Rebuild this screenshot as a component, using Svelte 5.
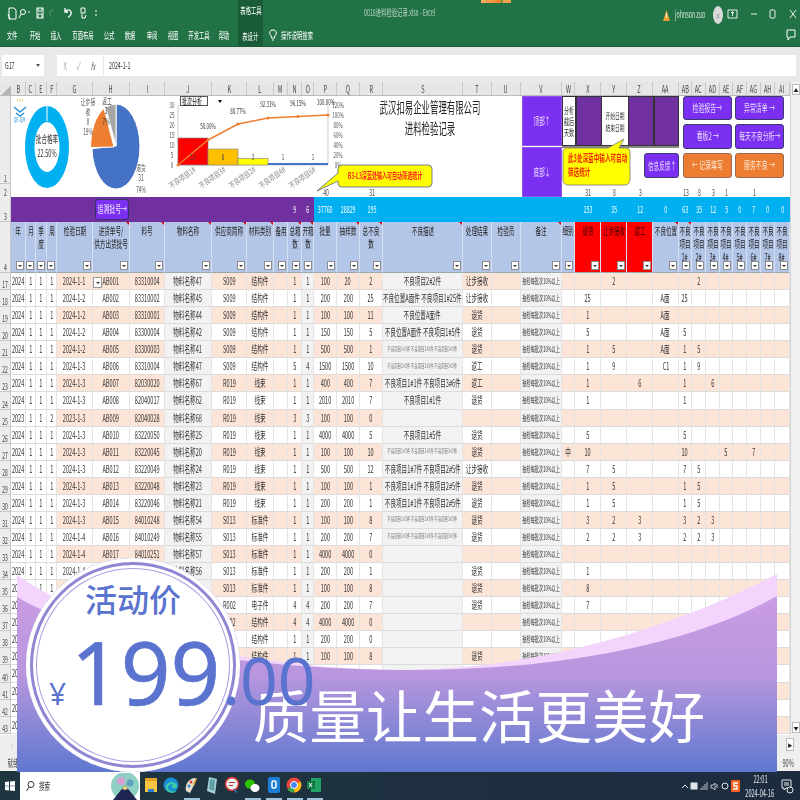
<script>
  const letters = 'B C E F G H I J K L M N O P Q R S T U V W X Y Z AA AB AC AD AE AF AG AH AI'.split(' ');
  const graySet = new Set(['J', 'O', 'S', 'V']);
  const plainSet = new Set(['B', 'C', 'E', 'F']);
  const tabs = [['文件', 12], ['开始', 35], ['插入', 56], ['页面布局', 83], ['公式', 109], ['数据', 130], ['审阅', 152], ['视图', 173], ['开发工具', 199], ['帮助', 224]];

  // header row 4: lines of each column title
  const heads = {
    B: ['年'], C: ['月'], E: ['季', '度'], F: ['周'], G: ['检验日期'], H: ['进货单号/', '供方出货批号'], I: ['料号'],
    J: ['物料名称'], K: ['供应商简称'], L: ['材料类别'], M: ['备用'], N: ['总箱', '数'], O: ['开箱', '数'], P: ['批量'],
    Q: ['抽样数'], R: ['总不良', '数'], S: ['不良描述'], T: ['处理结果'], U: ['检验员'], V: ['备注'], W: ['细别'],
    X: ['退货'], Y: ['让步接收'], Z: ['返工'], AA: ['不良位置'], AB: ['不良', '项目', '1#'], AC: ['不良', '项目', '2#'],
    AD: ['不良', '项目', '3#'], AE: ['不良', '项目', '4#'], AF: ['不良', '项目', '5#'], AG: ['不良', '项目', '6#'],
    AH: ['不良', '项目', '7#'], AI: ['不良', '项目', '8#']
  };
  const flagged = new Set(['H', 'I', 'J', 'K', 'L', 'N', 'O', 'Q', 'R', 'S', 'V', 'AA', 'AB']);
  const reds = new Set(['X', 'Y', 'Z']);

  const totals = { N: '9', O: '6', P: '37760', Q: '28829', R: '195', X: '153', Y: '35', Z: '12', AA: '0', AB: '63', AC: '35', AD: '12', AE: '5', AF: '0', AG: '7', AH: '0', AI: '0' };
  const row2 = { P: '40', R: '31', X: '31', Y: '8', Z: '3', AB: '13', AC: '8', AD: '3', AE: '1', AG: '1' };

  const tinyA = '不良项目1#5件 不良项目2#5件 不良项目3#5件';

  function row(num, head, desc, result, marks = '') {
    const f = head.split(' ');
    const v = {
      B: f[0], C: f[1], E: f[2], F: f[3], G: f[4], H: f[5], I: f[6], J: f[7], K: f[8], L: f[9], N: f[10], O: f[11],
      P: f[12], Q: f[13], R: f[14], S: desc, T: result, V: '抽检每批次10%以上'
    };
    for (const m of marks.split(' ')) {
      if (m) v[m.split('=')[0]] = m.split('=')[1];
    }
    return { num, v };
  }

  const rows = [
    row(17, '2024 1 1 1 2024-1-1 AB001 83310004 物料名称47 S009 结构件 1 1 100 20 2', '不良项目2#2件', '让步接收', 'Y=2 AC=2'),
    row(18, '2024 1 1 1 2024-1-2 AB002 83310002 物料名称45 S009 结构件 1 1 200 200 25', '不良位置A面件 不良项目1#25件', '让步接收', 'X=25 AA=A面 AB=25'),
    row(19, '2024 1 1 1 2024-1-2 AB003 83310001 物料名称44 S009 结构件 1 1 100 100 11', '不良位置A面件', '退货', 'X=1 AA=A面'),
    row(20, '2024 1 1 1 2024-1-2 AB004 83300004 物料名称42 S009 结构件 1 1 150 150 5', '不良位置A面件 不良项目1#5件', '退货', 'X=5 AA=A面 AB=5'),
    row(21, '2024 1 1 1 2024-1-2 AB005 83300003 物料名称41 S009 结构件 1 1 500 500 1', tinyA, '退货', 'X=1 Y=5 AA=A面 AB=1 AC=5'),
    row(22, '2024 1 1 1 2024-1-3 AB006 83310004 物料名称47 S009 结构件 5 4 1500 1500 10', tinyA, '返工', 'X=1 Y=9 AA=C1 AB=1 AC=9'),
    row(23, '2024 1 1 1 2024-1-3 AB007 82030020 物料名称67 R019 线束 1 1 400 400 7', '不良项目1#1件 不良项目3#6件', '返工', 'X=1 Z=6 AB=1 AD=6'),
    row(24, '2024 1 1 1 2024-1-3 AB008 82040017 物料名称62 R019 线束 1 1 2010 2010 7', '不良项目1#1件', '退货', 'X=1 AB=1'),
    row(25, '2023 1 1 2 2023-1-3 AB009 82040028 物料名称68 R019 线束 3 3 100 100 0', '', ''),
    row(26, '2024 1 1 1 2024-1-3 AB010 83220050 物料名称25 R019 线束 1 1 4000 4000 5', '不良项目1#5件', '退货', 'X=5 AB=5'),
    row(27, '2024 1 1 1 2024-1-3 AB011 83220045 物料名称20 R019 线束 1 1 100 100 10', tinyA, '退货', 'W=中 X=10 AB=10 AE=5 AG=7'),
    row(28, '2024 1 1 1 2024-1-3 AB012 83220049 物料名称24 R019 线束 1 1 500 500 12', '不良项目1#7件 不良项目2#5件', '让步接收', 'X=7 Y=5 AB=7 AC=5'),
    row(29, '2024 1 1 1 2024-1-3 AB013 83220048 物料名称23 R019 线束 1 1 100 100 1', '不良项目1#1件 不良项目2#5件', '退货', 'X=1 Y=5 AB=1 AC=5'),
    row(30, '2024 1 1 1 2024-1-3 AB014 83220046 物料名称21 R019 线束 1 1 200 200 1', '不良项目1#1件 不良项目2#5件', '退货', 'X=1 Y=5 AB=1 AC=5'),
    row(31, '2024 1 1 1 2024-1-3 AB015 84010248 物料名称54 S013 标准件 1 1 100 100 8', tinyA, '退货', 'X=3 Y=2 Z=3 AB=3 AC=2 AD=3'),
    row(32, '2024 1 1 1 2024-1-4 AB016 84010249 物料名称55 S013 标准件 1 1 200 200 7', tinyA, '退货', 'X=2 Y=2 Z=3 AB=2 AC=2 AD=3'),
    row(33, '2024 1 1 1 2024-1-4 AB017 84010251 物料名称57 S013 标准件 1 1 4000 4000 0', '', ''),
    row(34, '2024 1 1 1 2024-1-4 AB018 84010250 物料名称56 S013 标准件 1 1 200 200 1', '', '退货', 'X=1'),
    row(35, '2024 1 1 1 2024-1-4 AB019 84010252 物料名称58 S013 标准件 1 1 100 100 8', '', '退货', 'X=8'),
    row(36, '2024 1 1 1 2024-1-4 AB020 85010011 物料名称70 R002 电子件 4 4 200 200 7', '', '退货', 'X=7'),
    row(37, '2024 1 1 1 2024-1-4 AB021 83310005 物料名称48 S002 结构件 4 4 4000 4000 0', '', ''),
    row(38, '2024 1 1 1 2024-1-4 AB022 83310006 物料名称49 S002 结构件 1 1 200 200 0', '', ''),
    row(39, '2024 1 1 1 2024-1-4 AB023 83310007 物料名称50 S002 结构件 1 1 100 100 8', '', '退货'),
    row(40, '2024 1 1 1 2024-1-4 AB024 83310008 物料名称51 S002 结构件 1 1 100 100 0', '', ''),
    row(41, '2024 1 1 1 2024-1-4 AB025 83310009 物料名称52 S002 结构件 1 1 100 100 0', '', ''),
    row(42, '2024 1 1 1 2024-1-4 AB026 83310010 物料名称53 S002 结构件 1 1 100 100 0', '', ''),
    row(43, '2024 1 1 1 2024-1-4 AB027 83310011 物料名称59 S002 结构件 1 1 100 100 0', '', '')
  ];

  function bg(l, num) {
    if (graySet.has(l)) return 'gray';
    if (plainSet.has(l)) return '';
    return num % 2 ? 'peach' : '';
  }

  // pareto chart labels: x, y, text
  const axisL = [[105, '30'], [115, '25'], [125, '20'], [135, '15'], [145, '10'], [155, '5'], [165, '0']];
  const axisR = [[105, '120%'], [115, '100%'], [125, '80%'], [135, '60%'], [145, '40%'], [155, '20%'], [165, '0%']];
  const pcts = [[208, 129, '50.00%'], [238, 114, '80.77%'], [268, 107, '92.31%'], [298, 106, '96.15%'], [326, 105, '100.00%']];
  const barVals = [[193, '13'], [223, '8'], [253, '3'], [283, '1'], [313, '1']];
  const cats = [[184, '不良项目1#'], [214, '不良项目3#'], [244, '不良项目2#'], [274, '不良项目4#'], [304, '不良项目6#']];
  const dockX = [151, 171, 191, 212, 232, 252, 274, 294, 314];
</script>

<div class="page">
  <header class="title soft">
    <div class="qat">
      <svg width="100" height="16" viewBox="0 0 100 16" fill="none" stroke="#fff" stroke-width="1">
        <path d="M9 3h5l2 2v9H9zM8 9l2 5" />
        <circle cx="23" cy="7" r="2.5" /><path d="M21 9l-2 4M28 7l2 0" />
        <rect x="37" y="3" width="6" height="10" /><path d="M38 3v3h4V3M38 13v-4h4v4" />
        <path d="M54 6c-2-2-5 0-4 3 0 1 1 2 2 3" stroke="#5d9577" />
        <path d="M66 6c2-2 6-1 5 3 0 1-2 3-3 3M65 3v4h3" stroke-width="1.3" />
        <path d="M81 3h4v5h-4zM82 9v4h3l1-3" />
        <path d="M95 6h2M95 10h2" />
      </svg>
    </div>
    <div class="tool-tab">
      <span class="s">表格工具</span>
      <span class="s active">表设计</span>
    </div>
    <span class="s file">0018进料检验记录.xlsx - Excel</span>
    {#each tabs as t}
      <span class="s tab" style="left:{t[1]}px">{t[0]}</span>
    {/each}
    <svg class="bulb" width="8" height="12" viewBox="0 0 8 12" fill="none" stroke="#fff"><path d="M4 1a3 3 0 0 1 2 5.500L5.500 9h-3L2 6.500A3 3 0 0 1 4 1zM3 11h2" /></svg>
    <span class="s tab" style="left:297px">操作说明搜索</span>
    <div class="sprite"></div>
    <div class="account">
      <svg width="7" height="11" viewBox="0 0 7 11"><path d="M3.500 0L7 11H0z" fill="#f0a030" /><path d="M3.500 3v5" stroke="#fff" /></svg>
      <span class="s user">johnson zuo</span>
      <span class="avatar"><span class="s">JZ</span></span>
      <svg class="winbtns" width="76" height="12" viewBox="0 0 76 12" fill="none" stroke="#e6efe9">
        <path d="M2 2h9v8H2zM6.500 8V4M5 5l1.500-1.500L8 5" />
        <path d="M25 6h6" />
        <rect x="44" y="2" width="5" height="8" rx="1" />
        <path d="M64 2l6 8M70 2l-6 8" />
      </svg>
    </div>
    <svg class="comment" width="10" height="12" viewBox="0 0 10 12" fill="none" stroke="#fff"><path d="M1 1h8v7H4l-2 3V8H1z" /></svg>
  </header>

  <div class="formula soft">
    <div class="namebox"><span class="s left">G17</span><i class="tri"></i></div>
    <div class="fxbox">
      <span class="s mute">X</span><span class="s mute">✓</span><span class="s fx">fx</span>
    </div>
    <div class="input"><span class="s left">2024-1-1</span></div>
  </div>

  <div class="sheetwrap soft">
    <div class="sheet">
      <div class="grid colhead">
        <div class="corner"></div>
        {#each letters as l}
          <div class="ch"><span class="s">{l}</span></div>
        {/each}
      </div>

      <div class="top">
        <div class="nums">
          <div class="n1"><span class="s">1</span></div>
          <div class="n2"><span class="s">2</span></div>
        </div>
        <div class="canvas">
          <svg width="511" height="101" viewBox="11 96 511 101">
            <!-- logo -->
            <path d="M14 107l6 5 6-5M16 113l4 3 4-3" fill="none" stroke="#2f8fd6" stroke-width="1.500" />
            <path d="M20 98v4M17 99l1 3M23 99l-1 3" stroke="#e8c060" stroke-width=".7" />
            <text class="t" transform="translate(19.500 122) scale(.6 1)" font-size="6" fill="#2f8fd6">QE-QM</text>

            <!-- donut -->
            <ellipse cx="47" cy="147" rx="22" ry="41" fill="#00b0f0" />
            <ellipse cx="47" cy="147" rx="12.500" ry="25" fill="#fff" />
            <path d="M47 105v16" stroke="#fff" stroke-width="1" />
            <text class="t" transform="translate(47 143) scale(.56 1)" font-size="10" fill="#333">批合格率</text>
            <text class="t" transform="translate(47 157) scale(.56 1)" font-size="10" fill="#333">22.50%</text>

            <!-- pie -->
            <path d="M116 104A24 42.500 0 1 1 92 148.700L116 146Z" fill="#4472c4" stroke="#fff" />
            <path d="M114 147L90.500 147.500A24 42.500 0 0 1 104 108.500Z" fill="#ed7d31" stroke="#fff" />
            <path d="M116 146L105.800 107.500A24 42.500 0 0 1 116 104Z" fill="#a5a5a5" stroke="#fff" />
            <text class="t" transform="translate(88 105) scale(.56 1)" font-size="8.500" fill="#555">让步接</text>
            <text class="t" transform="translate(88 115) scale(.56 1)" font-size="8.500" fill="#555">收</text>
            <text class="t" transform="translate(88 125) scale(.56 1)" font-size="8.500" fill="#555">8</text>
            <text class="t" transform="translate(88 135) scale(.56 1)" font-size="8.500" fill="#555">19%</text>
            <text class="t" transform="translate(107 104) scale(.56 1)" font-size="8.500" fill="#555">返工</text>
            <text class="t" transform="translate(106 114) scale(.56 1)" font-size="8.500" fill="#333">3</text>
            <text class="t" transform="translate(106 125) scale(.56 1)" font-size="8.500" fill="#333">7%</text>
            <text class="t" transform="translate(141 171) scale(.56 1)" font-size="8.500" fill="#555">退货</text>
            <text class="t" transform="translate(141 181) scale(.56 1)" font-size="8.500" fill="#555">31</text>
            <text class="t" transform="translate(141 193) scale(.56 1)" font-size="8.500" fill="#555">74%</text>

            <!-- pareto -->
            <path d="M178 105V165H328V105" fill="none" stroke="#d0d0d0" />
            <rect x="178" y="138" width="30" height="27" fill="#f00" stroke="#7f7f7f" stroke-width=".6" />
            <rect x="208" y="149" width="30" height="16" fill="#ffc000" stroke="#7f7f7f" stroke-width=".6" />
            <rect x="238" y="158.500" width="30" height="6.500" fill="#ff0" stroke="#7f7f7f" stroke-width=".6" />
            <rect x="268" y="163" width="30" height="2" fill="#4472c4" />
            <rect x="298" y="163" width="30" height="2" fill="#4472c4" />
            <polyline points="178,165 208,140 238,124 268,118 298,116.500 328,115" fill="none" stroke="#ed7d31" stroke-width="1.500" />
            {#each [[178, 165], [208, 140], [238, 124], [268, 118], [298, 116.500], [328, 115]] as p}
              <circle cx={p[0]} cy={p[1]} r="1.500" fill="#ed7d31" />
            {/each}
            {#each axisL as a}
              <text class="t" transform="translate(172 {a[0] + 2.500}) scale(.56 1)" font-size="8" fill="#555">{a[1]}</text>
            {/each}
            {#each axisR as a}
              <text class="t" transform="translate(338 {a[0] + 2.500}) scale(.56 1)" font-size="8" fill="#555">{a[1]}</text>
            {/each}
            {#each pcts as p}
              <text class="t" transform="translate({p[0]} {p[1]}) scale(.56 1)" font-size="8" fill="#333">{p[2]}</text>
            {/each}
            {#each barVals as b}
              <text class="t" transform="translate({b[0]} 160) scale(.56 1)" font-size="8" fill="#444">{b[1]}</text>
            {/each}
            {#each cats as c}
              <text class="t" transform="translate({c[0]} 180) rotate(-36) scale(.76 1)" font-size="8" fill="#888">{c[1]}</text>
            {/each}

            <!-- left callout -->
            <path d="M342 165H428a4 4 0 0 1 4 4V183a4 4 0 0 1-4 4H342a4 4 0 0 1-4-4V181L317 191L338 173V169a4 4 0 0 1 4-4Z" fill="#ff0" stroke="#50608a" stroke-width=".8" />
            <text class="t" transform="translate(385 179) scale(.56 1)" font-size="9" font-weight="700" fill="#f22">B3-L3深蓝处输入可自动筛选统计</text>
          </svg>
          <div class="slicer"><span class="s left">批次分析</span><i class="tri small"></i></div>
          <div class="heading">
            <div class="h1"><span class="s">武汉扣易企业管理有限公司</span></div>
            <div class="h2"><span class="s">进料检验记录</span></div>
          </div>
        </div>

        <div class="nav">
          <div class="navbtn"><span class="s">顶部↑</span></div>
          <div class="navbtn"><span class="s">底部↓</span></div>
        </div>

        <div class="mid">
          <div class="blocks">
            <div class="wh w1"><span class="s">分析</span><span class="s">截后</span><span class="s">天数</span></div>
            <div class="pu"></div>
            <div class="wh w2"><span class="s">开始日期</span><span class="s">结束日期</span></div>
            <div class="pu"></div>
            <div class="pu"></div>
          </div>
          <div class="bubble">
            <svg width="70" height="50" viewBox="0 0 70 50">
              <path d="M6 10H46L62 1L57 10H64a4 4 0 0 1 4 4V42a5 5 0 0 1-5 5H6a5 5 0 0 1-5-5V14a4 4 0 0 1 5-4Z" fill="#ff0" stroke="#7a7a7a" stroke-width=".8" />
            </svg>
            <div class="bubble-text">
              <span class="s left">此3处深蓝中输入可自动</span>
              <span class="s left">筛选统计</span>
            </div>
          </div>
          <div class="feedback"><span class="s">信息反馈↑</span></div>
        </div>

        <div class="btns">
          <div class="btn"><span class="s">检验报告→</span></div>
          <div class="btn"><span class="s">异常清单 →</span></div>
          <div class="btn"><span class="s">看板2 →</span></div>
          <div class="btn"><span class="s">每天不良分析→</span></div>
          <div class="btn or"><span class="s">← 记录填写</span></div>
          <div class="btn or"><span class="s">服务不良 →</span></div>
        </div>

        <div class="grid rowtwo">
          <div></div>
          {#each letters as l}
            <div class="c bare">{#if row2[l]}<span class="s">{row2[l]}</span>{/if}</div>
          {/each}
        </div>
      </div>

      <div class="grid row3">
        <div class="rn"><span class="s">3</span></div>
        {#each letters as l, i}
          <div class="c {i < 13 ? 'pur' : 'sky'}">{#if totals[l]}<span class="s">{totals[l]}</span>{/if}</div>
        {/each}
        <div class="trace"><span class="s">追溯批号→</span></div>
      </div>

      <div class="grid row4">
        <div class="rn"><span class="s">4</span></div>
        {#each letters as l}
          <div class="hd" class:red={reds.has(l)}>
            {#each heads[l] as line}
              <span class="s">{line}</span>
            {/each}
            {#if flagged.has(l)}<i class="flag"></i>{/if}
            <i class="filter"></i>
          </div>
        {/each}
      </div>

      <div class="rows">
        {#each rows as r}
          <div class="grid data">
            <div class="rn low"><span class="s">{r.num}</span></div>
            {#each letters as l}
              <div class="c {bg(l, r.num)}" class:rem={l === 'V'} class:tiny={l === 'S' && r.v.S === tinyA}>
                {#if r.v[l]}<span class="s">{r.v[l]}</span>{/if}
                {#if r.num === 17 && l === 'H'}<i class="pick"></i>{/if}
              </div>
            {/each}
          </div>
        {/each}
      </div>
    </div>

    <div class="vscroll">
      <div class="arrow">▲</div>
      <div class="arrow bottom">▼</div>
    </div>
  </div>

  <div class="hbar soft"><span class="s">‹</span><i class="endbtn">▶</i></div>
  <div class="status soft"><span class="s">就绪</span><span class="s">90%</span></div>

  <footer class="task soft">
    <svg class="winlogo" width="10" height="10" viewBox="0 0 10 10" fill="#fff"><path d="M0 1l4-.5V4.700H0zM5 .4L10 0v4.700H5zM0 5.300h4V9.500L0 9zM5 5.300h5V10L5 9.600z" /></svg>
    <div class="search">
      <svg width="10" height="12" viewBox="0 0 10 12" fill="none" stroke="#333"><circle cx="6" cy="4.500" r="3" /><path d="M4 7L1.500 11" /></svg>
      <span class="s left">搜索</span>
      <svg class="scene" width="30" height="27" viewBox="0 0 30 27">
        <rect width="30" height="27" fill="#fff" />
        <circle cx="15" cy="13" r="14" fill="#8fd0c4" />
        <circle cx="11" cy="8" r="4" fill="#d5a0d0" />
        <circle cx="20" cy="10" r="3.500" fill="#5fa0c0" />
        <path d="M3 27L15 12L27 27Z" fill="#1d2550" />
        <path d="M12 16l3-4 3 4-3 1z" fill="#f0d080" />
      </svg>
    </div>
    <div class="dock">
      {#each dockX as x, i}
        <svg class="dicon" style="left:{x - 9}px" width="18" height="20" viewBox="0 0 18 20">
          {#if i === 0}
            <path d="M3 3h12v14H3z" fill="#f5c542" /><path d="M3 3h12v3H3z" fill="#e0a020" /><path d="M6 14h6v3H6z" fill="#2a7fd0" />
          {:else if i === 1}
            <circle cx="9" cy="10" r="7.500" fill="#1b8fd6" /><path d="M4 12c0-5 9-7 11-1 0 3-5 3-5 1 0-2 2-2 2-2-3-2-6 0-6 3 0 3 5 5 9 2-3 5-11 3-11-3z" fill="#40d0a0" />
          {:else if i === 2}
            <path d="M4 16C2 8 9 2 14 3l-2 7-4 8z" fill="#e8e0c8" /><circle cx="9" cy="7" r="1.500" fill="#e04040" /><circle cx="7" cy="11" r="1.500" fill="#3080e0" /><path d="M11 9l3-6 1 1-3 7z" fill="#e0a040" />
          {:else if i === 3}
            <path d="M6 2l8 2-2 15-8-3z" fill="#a8d0d8" /><path d="M7 4l5 1-1 11-5-2z" fill="#60a0a8" />
          {:else if i === 4}
            <circle cx="9" cy="9" r="6.500" fill="#f0f0f0" stroke="#d03030" stroke-width="1.500" /><path d="M6 7h6v1H6zM6 10h4v1H6z" fill="#b03030" /><path d="M10 13l5 4-2 1z" fill="#3070c0" />
          {:else if i === 5}
            <ellipse cx="7" cy="9" rx="5" ry="4.500" fill="#2dc100" /><ellipse cx="12" cy="13" rx="4.500" ry="4" fill="#fff" />
          {:else if i === 6}
            <rect x="3" y="2" width="12" height="16" rx="2" fill="#1b7fd8" /><rect x="7" y="6" width="4" height="7" rx="1.500" fill="none" stroke="#fff" stroke-width="1.500" />
          {:else if i === 7}
            <circle cx="9" cy="10" r="7.500" fill="#e8453c" /><path d="M9 10L2.500 14a7.500 7.500 0 0 0 7 3.500z" fill="#34a853" /><path d="M9 10l6.500-3.500A7.500 7.500 0 0 1 9.500 17.500z" fill="#fbbc05" /><circle cx="9" cy="10" r="3.500" fill="#4285f4" stroke="#fff" />
          {:else}
            <rect x="6" y="3" width="10" height="14" fill="#21a366" /><rect x="2" y="6" width="8" height="8" fill="#107c41" /><path d="M4 8l3 4M7 8l-3 4" stroke="#fff" />
          {/if}
        </svg>
      {/each}
      {#each [192, 253, 274, 295, 315] as x}
        <i class="under" style="left:{x - 8}px"></i>
      {/each}
    </div>
    <div class="tray">
      <svg width="48" height="12" viewBox="0 0 48 12" fill="none" stroke="#dfe6ea">
        <path d="M0 8l3-3 3 3" />
        <rect x="9" y="3" width="6" height="6" fill="#dfe6ea" />
        <path d="M19 10V8M21 10V6M23 10V4M25 10V2" stroke-width=".8" />
        <path d="M29 5h2l2-2v7l-2-2h-2zM35 4v4" stroke-width=".8" />
        <circle cx="43" cy="6" r="3" />
      </svg>
      <svg class="sogou" width="9" height="12" viewBox="0 0 9 12"><rect width="9" height="12" rx="1" fill="#f4601e" /><path d="M7 3H3v3h3v3H2" fill="none" stroke="#fff" stroke-width="1.300" /></svg>
      <div class="clock"><span class="s">22:01</span><span class="s">2024-04-16</span></div>
      <svg width="14" height="16" viewBox="0 0 14 16" fill="none" stroke="#e4e9ec"><path d="M2 2h9v8H6l-2 2v-2H2zM4 5h5M4 7h5" /><circle cx="10" cy="12" r="3" fill="#1f2d3a" /></svg>
    </div>
  </footer>

  <aside class="banner">
    <svg class="wave" width="760" height="217" viewBox="17 555 760 217">
      <defs>
        <linearGradient id="violet" x1="0" y1="0" x2="0" y2="1">
          <stop offset="0" stop-color="#c99ce2" />
          <stop offset=".45" stop-color="#b896de" />
          <stop offset="1" stop-color="#5f78cf" />
        </linearGradient>
      </defs>
      <path d="M17 575C110 640 260 668 400 670C540 670 680 625 777 574V772H17Z" fill="#f3d4fc" />
      <path d="M17 597C110 650 260 669 400 670C540 671 680 650 777 596V772H17Z" fill="url(#violet)" />
    </svg>
    <div class="slogan">质量让生活更美好</div>
    <div class="circle">
      <div class="promo">活动价</div>
    </div>
    <div class="price">
      <span class="yen">¥</span><span class="big">199</span><span class="cents">.00</span>
    </div>
  </aside>
</div>

<style>
  :global(body) {
    margin: 0;
    background: #fff;
  }

  .page {
    position: relative;
    width: 800px;
    height: 800px;
    overflow: hidden;
    display: flex;
    flex-direction: column;
    font-family: "Noto Sans CJK SC", "Noto Sans", sans-serif;
    font-size: 10px;
    color: #333;
    --cols: 11px 15px 10px 11px 10px 36px 37px 35px 47px 35px 27px 14px 14px 12px 23px 23px 23px 80px 29px 29px 41px 13px 26px 26px 26px 26px 13px 14px 14px 13px 14px 14px 14px 15px;
  }

  /* the shot is a blurry low-res capture */
  .soft {
    filter: blur(0.45px);
  }

  /* everything in the shot is squeezed sideways */
  .s {
    display: inline-block;
    white-space: nowrap;
    transform: scaleX(0.56);
    line-height: 1;
  }
  .s.left {
    transform-origin: left center;
  }
  .t {
    font-family: "Noto Sans CJK SC", "Noto Sans", sans-serif;
    text-anchor: middle;
  }

  .grid {
    display: grid;
    grid-template-columns: var(--cols);
  }

  /* title bar */
  .title {
    position: relative;
    height: 47px;
    flex: none;
    box-sizing: border-box;
    background: #217346;
    border-bottom: 1px solid #1a5c38;
    color: #fff;
  }
  .qat {
    position: absolute;
    left: 0;
    top: 5px;
  }
  .tool-tab {
    position: absolute;
    left: 238px;
    top: 0;
    width: 25px;
    height: 46px;
    background: #1a5c38;
    display: flex;
    flex-direction: column;
    align-items: center;
    justify-content: space-between;
    padding: 6px 0 5px;
    box-sizing: border-box;
    font-size: 9.5px;
  }
  .file {
    position: absolute;
    left: 364px;
    top: 8px;
    transform-origin: left center;
    color: #bcd4c4;
    font-size: 9.5px;
  }
  .tab {
    position: absolute;
    top: 31px;
    translate: -50% 0;
    font-size: 9.5px;
  }
  .bulb {
    position: absolute;
    left: 269px;
    top: 29px;
  }
  .sprite {
    position: absolute;
    left: 481px;
    top: 0;
    width: 30px;
    height: 3px;
    background: linear-gradient(90deg, #f7b267 0, #ef7d22 65%, #3a8f55 70%, #f4a450 75%);
  }
  .account {
    position: absolute;
    left: 663px;
    top: 6px;
    display: flex;
    align-items: center;
    gap: 0;
  }
  .user {
    width: 34px;
    margin-left: 5px;
    transform-origin: left center;
    color: #d8e6dd;
    font-size: 9.5px;
  }
  .avatar {
    width: 10px;
    height: 18px;
    border-radius: 50%;
    background: #d9d9d9;
    color: #666;
    font-size: 5px;
    display: flex;
    align-items: center;
    justify-content: center;
    margin-left: 4px;
  }
  .winbtns {
    margin-left: 3px;
    margin-top: -2px;
  }
  .comment {
    position: absolute;
    left: 786px;
    top: 29px;
  }

  /* name box and formula bar */
  .formula {
    height: 35px;
    flex: none;
    box-sizing: border-box;
    padding: 8px 4px 6px 2px;
    background: #e9e9e9;
    display: flex;
    gap: 1px;
  }
  .namebox {
    width: 42px;
    margin-right: 12px;
    background: #fff;
    display: flex;
    align-items: center;
    justify-content: space-between;
    padding: 0 4px 0 3px;
    box-sizing: border-box;
    font-size: 9.5px;
  }
  .fxbox {
    width: 46px;
    background: #fff;
    display: flex;
    align-items: center;
    justify-content: space-around;
    padding: 0 2px;
    box-sizing: border-box;
  }
  .mute {
    color: #aaa;
    font-size: 11px;
  }
  .fx {
    font-style: italic;
    color: #666;
    font-size: 10px;
  }
  .input {
    flex: 1;
    background: #fff;
    display: flex;
    align-items: center;
    padding-left: 5px;
    font-size: 9.5px;
  }
  .tri {
    width: 0;
    height: 0;
    border: 2.500px solid transparent;
    border-top: 3px solid #555;
    border-bottom: 0;
  }
  .tri.small {
    border-top-color: #000;
  }

  /* sheet */
  .sheetwrap {
    height: 653px;
    flex: none;
    display: flex;
  }
  .sheet {
    width: 790px;
    display: flex;
    flex-direction: column;
  }
  .colhead {
    height: 14px;
    background: #e6e6e6;
    border-bottom: 1px solid #bbb;
    box-sizing: border-box;
  }
  .corner {
    background: linear-gradient(135deg, transparent 60%, #b5b5b5 60%);
  }
  .ch {
    display: flex;
    align-items: center;
    justify-content: center;
    border-right: 1px solid #c8c8c8;
    color: #444;
    font-size: 10px;
    box-sizing: border-box;
  }

  .top {
    position: relative;
    height: 101px;
    display: flex;
    background: #fff;
  }
  .nums {
    width: 11px;
    background: #ececec;
    border-right: 1px solid #c8c8c8;
    box-sizing: border-box;
    display: flex;
    flex-direction: column;
    font-size: 9px;
    color: #444;
  }
  .n1 {
    flex: 1;
    display: flex;
    align-items: flex-end;
    justify-content: center;
    padding-bottom: 0;
    border-bottom: 1px solid #c8c8c8;
  }
  .n2 {
    height: 13px;
    display: flex;
    align-items: flex-end;
    justify-content: center;
  }
  .canvas {
    position: relative;
    width: 511px;
  }
  .canvas svg {
    display: block;
    overflow: visible;
  }
  .slicer {
    position: absolute;
    left: 169px;
    top: 0;
    width: 28px;
    height: 10px;
    box-sizing: border-box;
    border: 1px solid #555;
    background: #fff;
    display: flex;
    align-items: center;
    justify-content: space-between;
    padding: 0 1px;
    font-size: 9px;
    color: #111;
  }
  .heading {
    position: absolute;
    left: 369px;
    top: 0;
    width: 100px;
    display: flex;
    flex-direction: column;
    align-items: center;
    color: #222;
    font-size: 15px;
    line-height: 1;
  }
  .h1,
  .h2 {
    display: flex;
    justify-content: center;
  }
  .h1 {
    margin-top: 3px;
  }
  .h2 {
    margin-top: 6px;
  }
  .nav {
    width: 40px;
    display: flex;
    flex-direction: column;
    gap: 1px;
  }
  .navbtn {
    flex: 1;
    background: #7b2ff0;
    border: 1px solid #8f55e8;
    box-sizing: border-box;
    color: #e8dcff;
    display: flex;
    align-items: center;
    justify-content: center;
    font-size: 10px;
  }
  .mid {
    position: relative;
    width: 117px;
  }
  .blocks {
    height: 50px;
    display: grid;
    grid-template-columns: 14px 26px 26px 26px 25px;
    box-shadow: 0 2px 0 #8a8a8a;
  }
  .pu {
    background: #7030a0;
    border: 1px solid #333;
    box-sizing: border-box;
  }
  .wh {
    background: #fff;
    border: 1px solid #333;
    box-sizing: border-box;
    display: flex;
    flex-direction: column;
    align-items: center;
    justify-content: center;
    font-size: 9px;
    gap: 2px;
    color: #333;
  }
  .w2 {
    font-size: 8.500px;
    border-left: 0;
    border-right: 0;
    gap: 3px;
  }
  .bubble {
    position: absolute;
    left: 0;
    top: 42px;
    width: 70px;
    height: 50px;
  }
  .bubble svg {
    display: block;
  }
  .bubble-text {
    position: absolute;
    left: 6px;
    top: 15px;
    display: flex;
    flex-direction: column;
    gap: 4px;
    color: #f52a00;
    font-size: 10px;
    font-weight: 700;
  }
  .feedback {
    position: absolute;
    left: 82px;
    top: 57px;
    width: 35px;
    height: 25px;
    border-radius: 3px;
    background: #7b2ff0;
    border: 1px solid #3a3a70;
    box-sizing: border-box;
    color: #e8dcff;
    display: flex;
    align-items: center;
    justify-content: center;
  }
  .btns {
    width: 111px;
    box-sizing: border-box;
    padding: 0 6px 19px 4px;
    display: grid;
    grid-template-columns: 49px 49px;
    grid-template-rows: 24px 25px 25px;
    column-gap: 3px;
    row-gap: 4px;
  }
  .btn {
    border-radius: 3px;
    background: #7b2ff0;
    border: 1px solid #3a3a70;
    box-sizing: border-box;
    color: #e8dcff;
    display: flex;
    align-items: center;
    justify-content: center;
    font-size: 10.500px;
  }
  .btn.or {
    background: #ed7d31;
    border-color: #9a6a50;
    color: #fde8d8;
  }
  .rowtwo {
    position: absolute;
    left: 0;
    right: 0;
    bottom: 0;
    height: 10px;
    pointer-events: none;
  }

  .c {
    position: relative;
    display: flex;
    align-items: center;
    justify-content: center;
    min-width: 0;
    color: #333;
  }
  .c.bare {
    color: #444;
    font-size: 9px;
  }
  .rn {
    background: #ececec;
    border-right: 1px solid #c8c8c8;
    box-sizing: border-box;
    display: flex;
    align-items: flex-end;
    justify-content: center;
    font-size: 9px;
    color: #444;
  }
  .rn.low {
    border-bottom: 1px solid #c8c8c8;
  }

  .row3 {
    position: relative;
    height: 25px;
  }
  .row3 .rn {
    border-bottom: 1px solid #c8c8c8;
  }
  .pur {
    background: #7030a0;
    color: #fff;
    font-size: 9.5px;
  }
  .sky {
    background: #00b0f0;
    color: #fff;
    font-size: 9.5px;
  }
  .trace {
    position: absolute;
    left: 95px;
    top: 2px;
    width: 34px;
    height: 21px;
    border-radius: 3px;
    background: #7b2ff0;
    border: 1px solid #38306a;
    box-sizing: border-box;
    color: #f0e8ff;
    display: flex;
    align-items: center;
    justify-content: center;
    font-size: 10.500px;
  }

  .row4 {
    height: 51px;
  }
  .row4 .rn {
    border-bottom: 1px solid #c8c8c8;
  }
  .hd {
    position: relative;
    background: #b4c6e7;
    border-right: 1px solid #d6dff0;
    border-bottom: 1px solid #9aa;
    box-sizing: border-box;
    display: flex;
    flex-direction: column;
    align-items: center;
    padding-top: 4px;
    gap: 3px;
    color: #222;
    font-size: 10px;
  }
  .hd.red {
    background: #f00;
    color: #3a0000;
  }
  .flag {
    position: absolute;
    right: 0;
    top: 0;
    border-style: solid;
    border-width: 0 3px 3px 0;
    border-color: transparent #e00000 transparent transparent;
  }
  .filter {
    position: absolute;
    right: 1px;
    bottom: 2px;
    width: 8px;
    height: 9px;
    background: #fff;
    border: 1px solid #8d8d8d;
    box-sizing: border-box;
  }
  .filter::after {
    content: "";
    position: absolute;
    left: 1px;
    top: 3px;
    border: 2px solid transparent;
    border-top: 2px solid #333;
    border-bottom: 0;
  }

  .rows {
    display: grid;
    grid-template-rows: repeat(27, 17.07px);
  }
  .data .c {
    border-right: 1px solid #e4e4e4;
    border-bottom: 1px solid #dcdcdc;
    box-sizing: border-box;
  }
  .peach {
    background: #fce4d6;
  }
  .gray {
    background: #f2f2f2;
  }
  .rem {
    font-size: 8px;
  }
  .rem .s {
    transform: scaleX(0.52);
  }
  .tiny {
    font-size: 5.500px;
    color: #777;
    overflow: hidden;
  }
  .tiny .s {
    transform: scaleX(0.62);
  }
  .pick {
    position: absolute;
    left: 0;
    top: 4px;
    width: 9px;
    height: 11px;
    background: #fff;
    border: 1px solid #999;
    box-sizing: border-box;
  }
  .pick::after {
    content: "";
    position: absolute;
    left: 1.500px;
    top: 4px;
    border: 2px solid transparent;
    border-top: 2.500px solid #333;
    border-bottom: 0;
  }

  .vscroll {
    width: 10px;
    position: relative;
    background: #f0f0f0;
    border-left: 1px solid #d5d5d5;
    box-sizing: border-box;
  }
  .arrow {
    position: absolute;
    left: 1px;
    top: 2px;
    width: 8px;
    height: 11px;
    background: #fff;
    border: 1px solid #bbb;
    box-sizing: border-box;
    font-size: 5px;
    line-height: 9px;
    text-align: center;
    color: #222;
  }
  .arrow.bottom {
    top: auto;
    bottom: 2px;
  }

  .hbar {
    position: relative;
    height: 20px;
    flex: none;
    background: #eee;
    display: flex;
    align-items: center;
    padding-left: 11px;
    font-size: 9px;
    color: #999;
  }
  .endbtn {
    position: absolute;
    right: 6px;
    top: 3px;
    width: 6px;
    height: 11px;
    background: #fff;
    border: 1px solid #bbb;
    font-size: 5px;
    font-style: normal;
    line-height: 11px;
    text-align: center;
    color: #222;
  }
  .status {
    height: 16px;
    flex: none;
    background: #efefef;
    display: flex;
    align-items: center;
    justify-content: space-between;
    padding: 0 2px 0 3px;
    font-size: 10px;
    color: #444;
  }

  /* task bar */
  .task {
    position: relative;
    flex: 1;
    display: flex;
    align-items: center;
    background: linear-gradient(90deg, #1f3640, #1d2b3f);
  }
  .winlogo {
    margin: 0 5px;
    flex: none;
  }
  .search {
    width: 120px;
    height: 100%;
    background: #fff;
    display: flex;
    align-items: center;
    gap: 4px;
    padding-left: 5px;
    box-sizing: border-box;
    font-size: 10px;
    color: #333;
    position: relative;
  }
  .scene {
    position: absolute;
    right: 0;
    bottom: 0;
  }
  .dock {
    position: absolute;
    inset: 0;
    pointer-events: none;
  }
  .dicon {
    position: absolute;
    top: 4px;
  }
  .under {
    position: absolute;
    bottom: 0;
    width: 16px;
    height: 2px;
    background: #9ec4de;
  }
  .tray {
    position: absolute;
    right: 6px;
    top: 0;
    height: 100%;
    display: flex;
    align-items: center;
    gap: 1px;
  }
  .clock {
    width: 38px;
    display: flex;
    flex-direction: column;
    align-items: center;
    gap: 4px;
    font-size: 10px;
    color: #e4e9ec;
  }

  /* promo banner lying over the screenshot */
  .banner {
    position: absolute;
    left: 17px;
    top: 555px;
    width: 760px;
    height: 217px;
  }
  .wave {
    position: absolute;
    left: 0;
    top: 0;
  }
  .slogan {
    position: absolute;
    left: 236px;
    top: 130px;
    font-size: 56.500px;
    line-height: 1;
    white-space: nowrap;
    color: #fff;
  }
  .circle {
    position: absolute;
    left: 9px;
    top: 3px;
    width: 214px;
    height: 214px;
    border-radius: 50%;
    background: #fff;
    box-shadow: inset 0 0 0 4px #fff, inset 0 0 0 7px #8f86d4, inset 0 0 0 10px #fff, inset 0 0 0 11px #a69ddf;
    text-align: center;
  }
  .promo {
    margin-top: 21px;
    font-size: 32px;
    font-weight: 500;
    line-height: 1.2;
    color: #5a73cf;
  }
  .price {
    position: absolute;
    left: 32px;
    top: 73px;
    display: flex;
    align-items: baseline;
    font-family: "Noto Sans", sans-serif;
    color: #5a73cf;
    line-height: 1;
    white-space: nowrap;
  }
  .yen {
    font-size: 30px;
    width: 22px;
  }
  .big {
    font-size: 87px;
    -webkit-text-stroke: 0.6px #5a73cf;
  }
  .cents {
    font-size: 66px;
    margin-left: 2px;
  }
</style>
